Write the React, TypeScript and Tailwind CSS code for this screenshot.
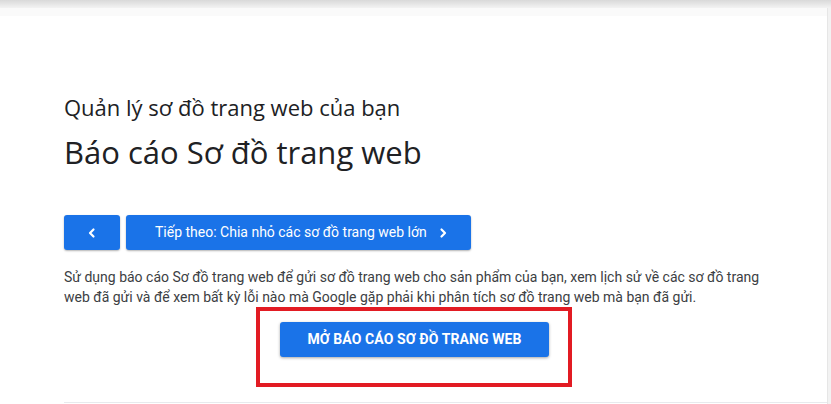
import React from "react";

export default function App() {
  return (
    <div className="relative w-[831px] h-[404px] overflow-hidden bg-white" style={{ fontFamily: "Roboto, 'Noto Sans', sans-serif" }}>
      <div className="h-[8px] bg-gradient-to-b from-[#d9d9d9] to-[#f3f3f3]" />
      <div className="h-[8px] bg-[#fafafa]" />
      <div className="absolute right-0 top-[8px] bottom-0 w-[4px] bg-[#f2f2f2] border-l border-[#e6e6e6]" />
      <div className="pl-[64px] pt-[77px]">
        <h2 className="text-[22px] leading-[28px] text-[#202124]" style={{ fontFamily: "'Open Sans', sans-serif" }}>
          Quản lý sơ đồ trang web của bạn
        </h2>
        <h1 className="mt-[11px] text-[31px] leading-[40px] text-[#202124]" style={{ fontFamily: "'Open Sans', sans-serif" }}>
          Báo cáo Sơ đồ trang web
        </h1>
        <div className="mt-[43px] flex gap-[6px]">
          <button className="w-[56px] h-[35px] rounded-[3px] bg-[#1a73e8] text-white flex items-center justify-center shadow-[0_1px_2px_rgba(0,0,0,0.3)]">
            <svg width="12" height="12" viewBox="0 0 12 12" fill="none" stroke="white" strokeWidth="2.2" strokeLinecap="round" strokeLinejoin="round">
              <path d="M7.5 2.5 4 6l3.5 3.5" />
            </svg>
          </button>
          <button className="w-[345px] h-[35px] rounded-[3px] bg-[#1a73e8] text-white flex items-center pl-[29px] gap-[10px] text-[14px] shadow-[0_1px_2px_rgba(0,0,0,0.3)]">
            <span>Tiếp theo: Chia nhỏ các sơ đồ trang web lớn</span>
            <svg width="12" height="12" viewBox="0 0 12 12" fill="none" stroke="white" strokeWidth="2.2" strokeLinecap="round" strokeLinejoin="round">
              <path d="M4.5 2.5 8 6l-3.5 3.5" />
            </svg>
          </button>
        </div>
        <p className="mt-[17px] w-[720px] text-[14px] leading-[20px] text-[#3c4043]">
          Sử dụng báo cáo Sơ đồ trang web để gửi sơ đồ trang web cho sản phẩm của bạn, xem lịch sử về các sơ đồ trang web đã gửi và để xem bất kỳ lỗi nào mà Google gặp phải khi phân tích sơ đồ trang web mà bạn đã gửi.
        </p>
        <div className="ml-[192px] mt-0 w-[316px] h-[80px] border-[4px] border-[#e21b23] flex items-start pt-[11px] pl-[20px]">
          <button className="w-[269px] h-[35px] rounded-[3px] bg-[#1a73e8] text-white text-[14px] font-bold uppercase tracking-[0.1px] shadow-[0_1px_3px_rgba(0,0,0,0.35)]">
            Mở báo cáo sơ đồ trang web
          </button>
        </div>
      </div>
      <div className="absolute left-[64px] right-[4px] bottom-[1px] h-[1px] bg-[#e8eaed]" />
    </div>
  );
}
